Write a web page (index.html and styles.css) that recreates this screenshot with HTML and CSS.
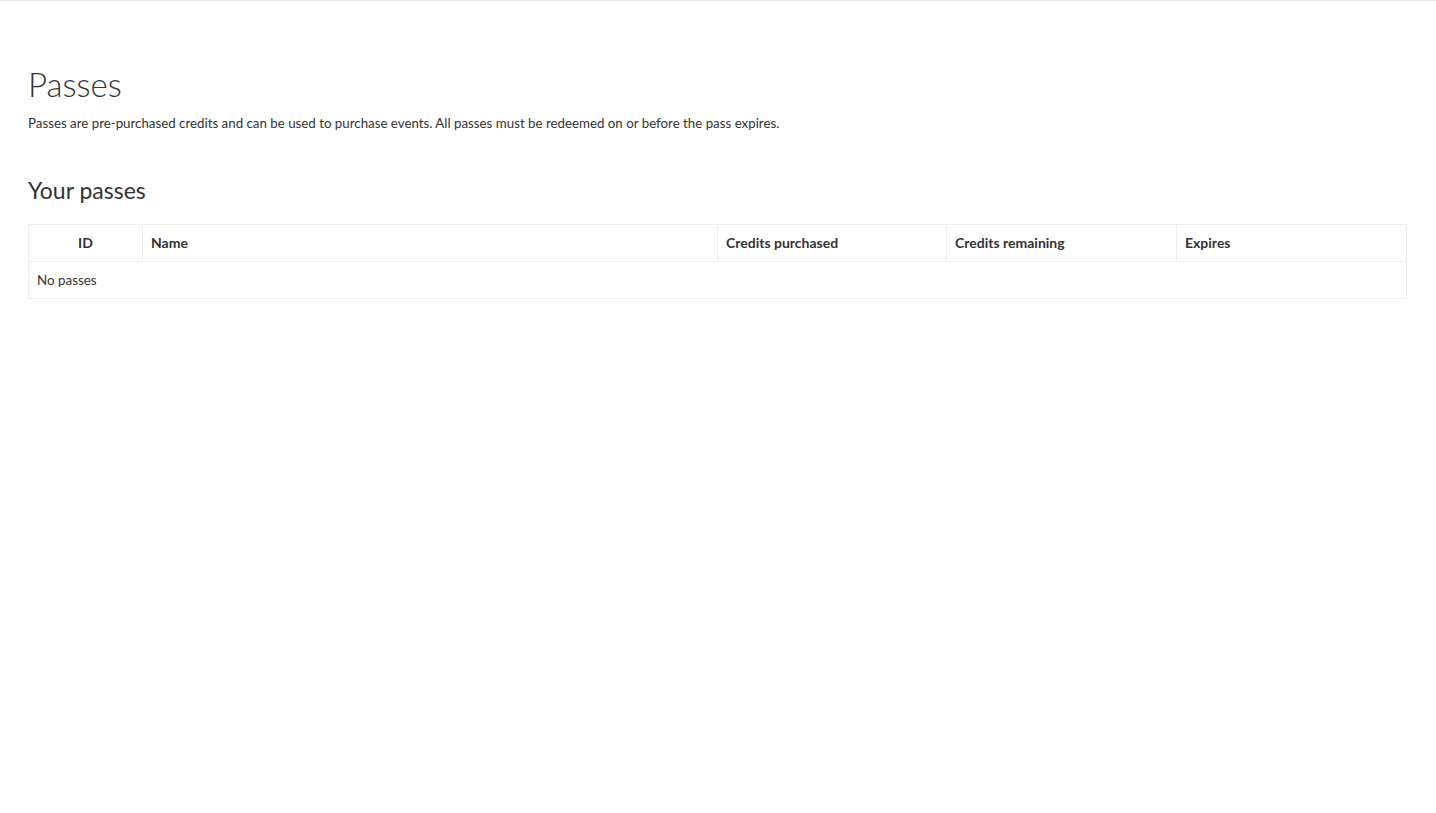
FILE: index.html
```html
<!DOCTYPE html>
<html>
<head>
<meta charset="utf-8">
<link rel="stylesheet" href="styles.css">
</head>
<body>
<div class="topbar"></div>
<main class="page">
  <h1 class="title">Passes</h1>
  <p class="lead">Passes are pre-purchased credits and can be used to purchase events. All passes must be redeemed on or before the pass expires.</p>
  <h2 class="subtitle">Your passes</h2>
  <table class="passes">
    <colgroup>
      <col class="c-id"><col class="c-name"><col class="c-cp"><col class="c-cr"><col class="c-exp">
    </colgroup>
    <thead>
      <tr><th class="center">ID</th><th>Name</th><th>Credits purchased</th><th>Credits remaining</th><th>Expires</th></tr>
    </thead>
    <tbody>
      <tr><td colspan="5">No passes</td></tr>
    </tbody>
  </table>
</main>
</body>
</html>
```
FILE: styles.css
```css
html, body { margin: 0; padding: 0; background: #fff; }
body { font-family: Lato, "Liberation Sans", sans-serif; color: #333; font-size: 14px; }
.topbar { height: 1px; background: #e8e8e8; }
.page { padding: 63px 29px 0 28px; }
.title { margin: 0; font-weight: 300; font-size: 33px; line-height: 40px; color: #333; }
.lead { margin: 9px 0 0; font-size: 13.3px; line-height: 20px; }
.subtitle { margin: 42px 0 0; font-weight: 400; font-size: 23px; line-height: 30px; }
.passes { margin-top: 19px; width: 1379px; border-collapse: collapse; border: 1px solid #eeeeee; table-layout: fixed; }
.c-id { width: 114px; } .c-name { width: 575px; } .c-cp { width: 229px; } .c-cr { width: 230px; }
.passes th, .passes td { border: 1px solid #eeeeee; padding: 0 8px 1px; height: 35px; text-align: left; font-size: 14px; }
.passes th { font-weight: 700; }
.passes th.center { text-align: center; }
.passes td { border-left: 0; border-right: 0; font-size: 13.4px; }
```
